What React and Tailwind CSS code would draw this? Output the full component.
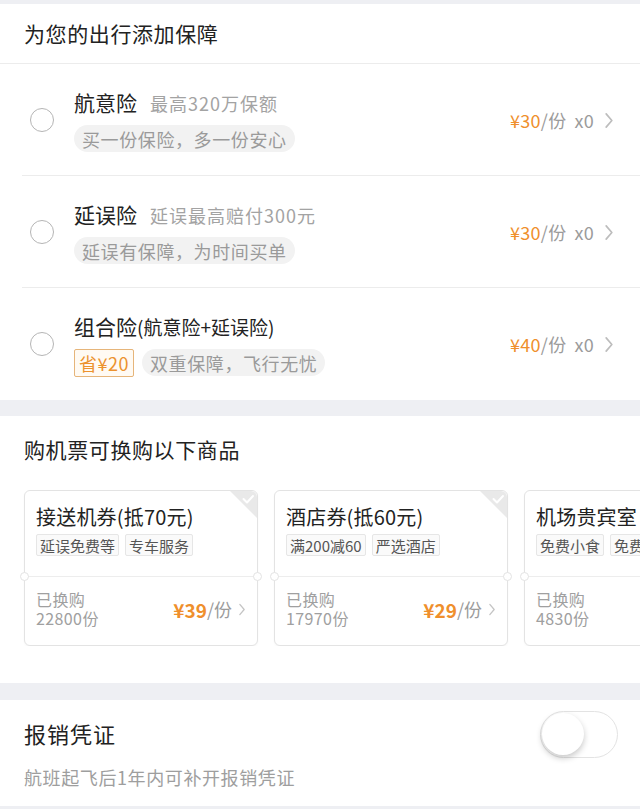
import React from "react";

const FONT = { fontFamily: '"Noto Sans CJK SC", "Noto Sans", sans-serif' };

function Chevron({ className = "" }) {
  return (
    <svg className={className} viewBox="0 0 10 18" fill="none" stroke="currentColor" strokeWidth="1.8" strokeLinecap="round" strokeLinejoin="round">
      <path d="M2 2 L8 9 L2 16" />
    </svg>
  );
}

function InsuranceRow({ title, titleExtra, sub, tag, badge, price, last }) {
  return (
    <div className="relative flex items-center h-[112px] pl-[30px] pr-[26px]">
      <div className="w-[24px] h-[24px] rounded-full border-[1.5px] border-[#b5b5b5] shrink-0" />
      <div className="ml-[20px] flex flex-col">
        <div className="flex items-baseline h-[28px]">
          <span className="text-[21px] text-[#222] leading-[28px]">{title}</span>
          {titleExtra && <span className="text-[19px] text-[#222] leading-[28px]">{titleExtra}</span>}
          {sub && <span className="ml-[13px] text-[18px] tracking-[1px] text-[#a3a3a3] leading-[28px]">{sub}</span>}
        </div>
        <div className="mt-[9px] flex items-center gap-[8px]">
          {badge && (
            <span className="h-[28px] px-[4px] flex items-center border border-[#e6b57a] bg-[#fffaf3] text-[#ec922e] text-[18px] tracking-[0.5px] rounded-[2px] leading-none">{badge}</span>
          )}
          <span className="h-[27px] px-[8px] flex items-center rounded-full bg-[#f2f2f2] text-[#9a9a9a] text-[18px] tracking-[0.6px] leading-none">{tag}</span>
        </div>
      </div>
      <div className="ml-auto flex items-center text-[18px] tracking-[0.3px] leading-none">
        <span className="text-[#ef8f2c]">{price}</span>
        <span className="text-[#9b9b9b]">/份</span>
        <span className="ml-[8px] text-[#9b9b9b]">x0</span>
        <Chevron className="ml-[10px] w-[10px] h-[17px] text-[#bdbdbd]" />
      </div>
      {!last && <div className="absolute left-[22px] right-0 bottom-0 h-px bg-[#ececec]" />}
    </div>
  );
}

function Card({ title, tags, count, price }) {
  return (
    <div className="relative w-[234px] h-[156px] shrink-0 rounded-[6px] border border-[#e3e3e3] bg-white flex flex-col shadow-[0_1px_2px_rgba(0,0,0,0.04)]">
      <div className="absolute top-0 right-0 w-[27px] h-[27px] overflow-hidden rounded-tr-[6px]">
        <svg viewBox="0 0 27 27" className="w-full h-full">
          <polygon points="0,0 27,0 27,27" fill="#e9e9e9" />
          <path d="M13.5 8 L17 11.5 L23 5" fill="none" stroke="#fff" strokeWidth="2" strokeLinecap="round" strokeLinejoin="round" />
        </svg>
      </div>
      <div className="h-[86px] px-[11px] pt-[12px] border-b border-[#ededed]">
        <div className="text-[20px] tracking-[0.2px] text-[#222] leading-[28px] whitespace-nowrap">{title}</div>
        <div className="mt-[3px] flex gap-[6px]">
          {tags.map((t) => (
            <span key={t} className="px-[3px] h-[22px] flex items-center border border-[#e6e6e6] bg-[#fafafa] text-[15px] text-[#555] leading-none rounded-[2px] whitespace-nowrap">{t}</span>
          ))}
        </div>
      </div>
      <div className="absolute left-[-5px] top-[81px] w-[9px] h-[9px] rounded-full bg-white border border-[#e3e3e3]" />
      <div className="absolute right-[-5px] top-[81px] w-[9px] h-[9px] rounded-full bg-white border border-[#e3e3e3]" />
      <div className="flex-1 flex items-center px-[11px] pb-[4px]">
        <div className="flex flex-col text-[16px] tracking-[0.4px] text-[#a0a0a0]">
          <div className="leading-[19px]">已换购</div>
          <div className="leading-[19px]">{count}</div>
        </div>
        {price && (
          <div className="ml-auto flex items-center leading-none">
            <span className="text-[19px] font-bold text-[#ef8f2c]">{price}</span>
            <span className="text-[18px] text-[#9b9b9b]">/份</span>
            <Chevron className="ml-[6px] w-[8px] h-[13px] text-[#c4c4c4]" />
          </div>
        )}
      </div>
    </div>
  );
}

export default function App() {
  return (
    <div style={FONT} className="w-[640px] h-[809px] bg-[#eeeff3] overflow-hidden">
      <div className="h-[4px]" />
      <div className="bg-white">
        <div className="h-[60px] flex items-center pl-[24px] border-b border-[#ececec]">
          <span className="text-[21px] tracking-[0.6px] text-[#222]">为您的出行添加保障</span>
        </div>
        <InsuranceRow title="航意险" sub="最高320万保额" tag="买一份保险，多一份安心" price="¥30" />
        <InsuranceRow title="延误险" sub="延误最高赔付300元" tag="延误有保障，为时间买单" price="¥30" />
        <InsuranceRow title="组合险" titleExtra="(航意险+延误险)" badge="省¥20" tag="双重保障，飞行无忧" price="¥40" last />
      </div>
      <div className="h-[16px]" />
      <div className="bg-white h-[267px]">
        <div className="h-[68px] flex items-center pl-[24px]">
          <span className="text-[21px] tracking-[0.6px] text-[#222]">购机票可换购以下商品</span>
        </div>
        <div className="mt-[6px] flex gap-[16px] pl-[24px] overflow-hidden">
          <Card title="接送机券(抵70元)" tags={["延误免费等", "专车服务"]} count="22800份" price="¥39" />
          <Card title="酒店券(抵60元)" tags={["满200减60", "严选酒店"]} count="17970份" price="¥29" />
          <Card title="机场贵宾室" tags={["免费小食", "免费休息"]} count="4830份" />
        </div>
      </div>
      <div className="h-[17px]" />
      <div className="bg-white h-[106px] pl-[24px] pr-[22px] flex flex-col">
        <div className="flex items-center justify-between mt-[11px]">
          <span className="text-[22px] tracking-[1px] text-[#222] leading-[30px] -mt-[3px]">报销凭证</span>
          <div className="w-[78px] h-[47px] rounded-full border-[1.5px] border-[#e3e3e3] bg-white relative">
            <div className="absolute left-[1px] top-[1px] w-[42px] h-[42px] rounded-full bg-white shadow-[0_3px_6px_rgba(0,0,0,0.22)]" />
          </div>
        </div>
        <span className="mt-[6px] text-[18px] tracking-[0.6px] text-[#9e9e9e]">航班起飞后1年内可补开报销凭证</span>
      </div>
    </div>
  );
}
